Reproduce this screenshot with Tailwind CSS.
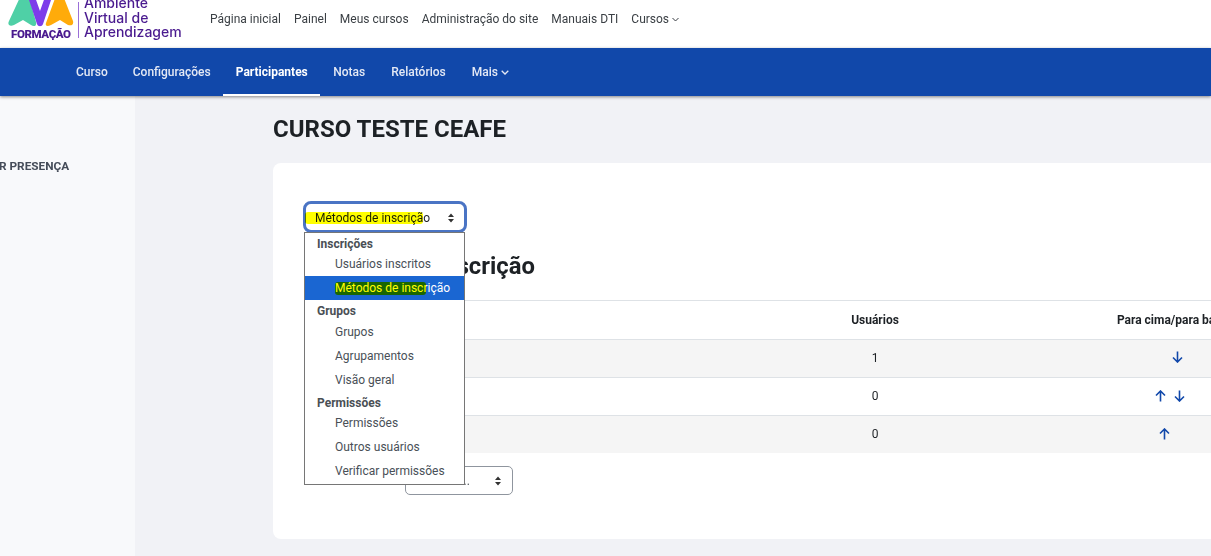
<!DOCTYPE html>
<html lang="pt-BR">
<head>
    <meta charset="UTF-8">
    <meta name="viewport" content="width=device-width, initial-scale=1.0">
    <title>Curso Teste CEAFE</title>
    <script src="https://cdn.jsdelivr.net/npm/@tailwindcss/browser@4"></script>
</head>
<body class="w-[1211px] h-[556px] overflow-hidden bg-[#f1f2f6] font-['Roboto',sans-serif] text-[#1d2125] flex flex-col">

    <!-- top bar -->
    <header class="h-12 shrink-0 bg-white flex items-start overflow-hidden">
        <svg class="w-[66px] h-[42px] ml-[8px] shrink-0" viewBox="0 0 66 42">
            <path d="M14 -7 C16 -9 19 -9 20 -7 L28 22 C29 26 26 27 23 25 L15 20 L6 25 C2 27 -1 25 1 21 Z" fill="#4fd0a6"/>
            <path d="M20 -3 L27 -3 L32 11 L37 -3 L44 -3 L35 24 C34 27 30 27 29 24 Z" fill="#7d3cea"/>
            <path d="M49 -7 C51 -9 53 -9 54 -7 L65 21 C66 25 63 26 60 25 L52 20 L43 25 C39 27 37 26 38 23 Z" fill="#ffab0a"/>
        </svg>
        <div class="w-[59px] -ml-[63px] mt-[27px] shrink-0 text-[11.5px] leading-[14px] font-black text-[#4a1a8f] tracking-[-0.4px] whitespace-nowrap">FORMAÇÃO</div>
        <div class="w-px h-[36px] ml-[8px] mt-[2px] shrink-0 bg-[#9b6fd8]"></div>
        <div class="ml-[5px] -mt-[4px] w-[120px] shrink-0 font-['Inter',sans-serif] font-medium text-[14px] leading-[14.5px] text-[#4a1a8f]">
            <div>Ambiente</div>
            <div>Virtual de</div>
            <div>Aprendizagem</div>
        </div>
        <nav class="flex items-center gap-[13px] ml-[6px] h-[38px] text-[12px] text-[#3a3f44] whitespace-nowrap">
            <a>Página inicial</a>
            <a>Painel</a>
            <a>Meus cursos</a>
            <a>Administração do site</a>
            <a>Manuais DTI</a>
            <a class="flex items-center gap-[3px]">Cursos
                <svg class="w-[7px] h-[5px]" viewBox="0 0 7 5" fill="none" stroke="#3a3f44" stroke-width="1"><path d="M0.5 1 L3.5 4 L6.5 1"/></svg>
            </a>
        </nav>
    </header>

    <!-- course nav -->
    <nav class="relative z-10 h-12 shrink-0 bg-[#1148aa] shadow-[0_1px_3px_rgba(0,0,0,0.45)] flex pl-[63.5px] text-[12px] font-medium text-[#e4e9f5] whitespace-nowrap">
        <a class="px-[12.5px] flex items-center">Curso</a>
        <a class="px-[12.5px] flex items-center">Configurações</a>
        <a class="px-[12.5px] flex items-center font-bold text-white border-b-2 border-white pt-[2px]">Participantes</a>
        <a class="px-[13px] flex items-center">Notas</a>
        <a class="px-[13px] flex items-center">Relatórios</a>
        <a class="px-[13px] flex items-center gap-[3px]">Mais
            <svg class="w-[8px] h-[5px]" viewBox="0 0 8 5" fill="none" stroke="#e4e9f5" stroke-width="1.3"><path d="M0.7 0.8 L4 4 L7.3 0.8"/></svg>
        </a>
    </nav>

    <div class="flex flex-1 min-h-0">
        <!-- left drawer -->
        <aside class="w-[135px] shrink-0 bg-[#f8f9fb] pt-[62px] overflow-hidden">
            <div class="-ml-px h-4 text-[11.8px] leading-4 font-bold text-[#454c59] whitespace-nowrap">R PRESENÇA</div>
        </aside>

        <main class="pl-[138px] pt-[17px] w-[1500px] shrink-0">
            <h1 class="text-[24px] leading-8 font-bold text-[#1d2125] mb-[18px]">CURSO TESTE CEAFE</h1>

            <section class="relative w-[1200px] bg-white rounded-lg pl-8 pt-[38px] pb-[44px]">
                <!-- select with focus ring -->
                <div class="relative -ml-[2px] w-[164px] h-[32px] flex items-center justify-between pl-[9px] pr-[10px] pt-[2px] bg-white rounded-lg border-3 border-[#4a74c4] text-[12px]">
                    <span>Métodos de inscrição</span>
                    <svg class="w-[6px] h-[10px]" viewBox="0 0 6 10" fill="#333"><path d="M3 0.5 L6 4 H0 Z M0 6 H6 L3 9.5 Z"/></svg>
                    <span class="absolute left-[-1px] top-[8px] w-[118px] h-[12px] rounded-[3px] bg-[#ffff00] mix-blend-multiply"></span>
                </div>

                <h2 class="mt-[17px] text-[23.8px] leading-8 font-bold whitespace-nowrap">Métodos de inscrição</h2>

                <div class="mt-[18px] w-[1032px] text-[12px] border-t border-[#dee2e6]">
                    <div class="grid grid-cols-[495px_150px_67px_320px] h-[39px] items-center border-b border-[#dee2e6] font-bold">
                        <div></div>
                        <div class="text-center">Usuários</div>
                        <div></div>
                        <div class="text-center pr-[6px]">Para cima/para baixo</div>
                    </div>
                    <div class="grid grid-cols-[495px_150px_67px_320px] h-[38px] items-center border-b border-[#dee2e6] bg-[#f5f5f5]">
                        <div></div>
                        <div class="text-center pb-[2px]">1</div>
                        <div></div>
                        <div class="flex justify-center pb-[3px] text-[#1148aa]">
                            <svg class="w-[11px] h-[12px]" viewBox="0 0 11 12" fill="none" stroke="currentColor" stroke-width="1.6"><path d="M5.5 0.5 V11 M1 6.5 L5.5 11 L10 6.5"/></svg>
                        </div>
                    </div>
                    <div class="grid grid-cols-[495px_150px_67px_320px] h-[38px] items-center border-b border-[#dee2e6]">
                        <div></div>
                        <div class="text-center pb-[2px]">0</div>
                        <div></div>
                        <div class="flex justify-center gap-2 pr-[14px] pb-[2px] text-[#1148aa]">
                            <svg class="w-[11px] h-[12px]" viewBox="0 0 11 12" fill="none" stroke="currentColor" stroke-width="1.6"><path d="M5.5 11.5 V1 M1 5.5 L5.5 1 L10 5.5"/></svg>
                            <svg class="w-[11px] h-[12px]" viewBox="0 0 11 12" fill="none" stroke="currentColor" stroke-width="1.6"><path d="M5.5 0.5 V11 M1 6.5 L5.5 11 L10 6.5"/></svg>
                        </div>
                    </div>
                    <div class="grid grid-cols-[495px_150px_67px_320px] h-[37px] items-center bg-[#f5f5f5]">
                        <div></div>
                        <div class="text-center pb-[2px]">0</div>
                        <div></div>
                        <div class="flex justify-center pr-[26px] pb-[2px] text-[#1148aa]">
                            <svg class="w-[11px] h-[12px]" viewBox="0 0 11 12" fill="none" stroke="currentColor" stroke-width="1.6"><path d="M5.5 11.5 V1 M1 5.5 L5.5 1 L10 5.5"/></svg>
                        </div>
                    </div>
                </div>

                <div class="mt-[13px] ml-[100px] w-[108px] h-[29px] flex items-center justify-between pl-[9px] pr-[11px] border border-[#8f959e] rounded-[5px] text-[12px] text-[#495057]">
                    <span>Escolher...</span>
                    <svg class="w-[6px] h-[10px]" viewBox="0 0 6 10" fill="#333"><path d="M3 0.5 L6 4 H0 Z M0 6 H6 L3 9.5 Z"/></svg>
                </div>

                <!-- open dropdown list -->
                <div class="absolute left-[31px] top-[69px] w-[161px] pb-px bg-white border border-[#767676] text-[12px] text-[#495057] whitespace-nowrap">
                    <div class="h-[19px] pl-3 pt-[3px] flex items-center font-bold text-[#4a4f55]">Inscrições</div>
                    <div class="h-6 pl-[30px] flex items-center">Usuários inscritos</div>
                    <div class="relative h-6 pl-[30px] flex items-center bg-[#1a66d2] text-white">Métodos de inscrição
                        <span class="absolute left-[30px] top-[6px] w-[91px] h-[13px] rounded-[3px] bg-[#ffff00] mix-blend-multiply"></span>
                    </div>
                    <div class="h-5 pl-3 pt-[2px] flex items-center font-bold text-[#4a4f55]">Grupos</div>
                    <div class="h-6 pl-[30px] flex items-center">Grupos</div>
                    <div class="h-6 pl-[30px] flex items-center">Agrupamentos</div>
                    <div class="h-6 pl-[30px] flex items-center">Visão geral</div>
                    <div class="h-[19px] pl-3 pt-[3px] flex items-center font-bold text-[#4a4f55]">Permissões</div>
                    <div class="h-6 pl-[30px] flex items-center">Permissões</div>
                    <div class="h-6 pl-[30px] flex items-center">Outros usuários</div>
                    <div class="h-6 pl-[30px] flex items-center">Verificar permissões</div>
                </div>
            </section>
        </main>
    </div>
</body>
</html>
